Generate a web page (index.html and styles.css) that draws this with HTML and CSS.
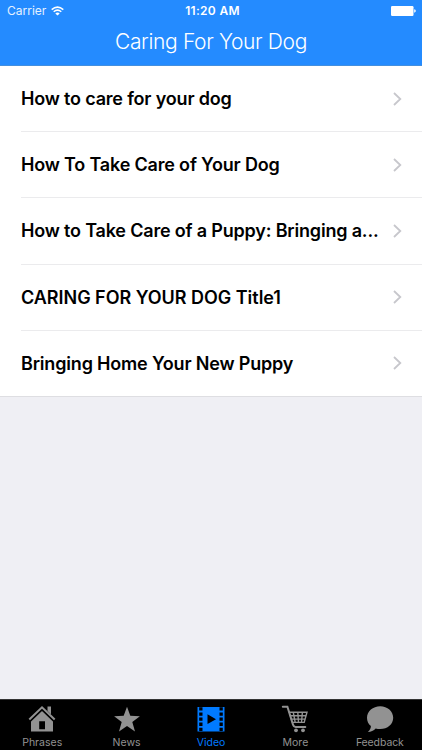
FILE: index.html
```html
<!DOCTYPE html>
<html lang="en">
<head>
  <meta charset="UTF-8" />
  <meta name="viewport" content="width=device-width, initial-scale=1.0"/>
  <title>Caring For Your Dog</title>
  <link rel="stylesheet" href="styles.css">
</head>
<body>
  <header class="header">
    <div class="status-bar">
      <div class="carrier">
        <span>Carrier</span>
        <svg class="wifi" viewBox="0 0 13 10" width="13" height="10">
          <path d="M.7 3.6 Q6.5 -1.4 12.3 3.6" />
          <path d="M2.7 5.8 Q6.5 2.5 10.3 5.8" />
          <path class="wifi-dot" d="M6.5 9.6 L4.3 7.4 Q6.5 5.6 8.7 7.4 Z" />
        </svg>
      </div>
      <span class="time">11:20 AM</span>
      <div class="battery-box">
        <svg viewBox="0 0 25 10" width="25" height="10" fill="#fff">
          <rect x="0" y="0" width="22.5" height="10" rx="1.2" />
          <path d="M23.2 3.3 Q24.8 3.6 24.8 5 T23.2 6.7 Z" />
        </svg>
      </div>
    </div>
    <h1>Caring For Your Dog</h1>
  </header>

  <ul class="video-list">
    <li class="row">
      <a href="#"><span class="row-title">How to care for your dog</span><svg class="chevron" viewBox="0 0 9 14" width="9" height="14"><path d="M1 1 L7.3 7 L1 13" /></svg></a>
    </li>
    <li class="row">
      <a href="#"><span class="row-title">How To Take Care of Your Dog</span><svg class="chevron" viewBox="0 0 9 14" width="9" height="14"><path d="M1 1 L7.3 7 L1 13" /></svg></a>
    </li>
    <li class="row">
      <a href="#"><span class="row-title">How to Take Care of a Puppy: Bringing a...</span><svg class="chevron" viewBox="0 0 9 14" width="9" height="14"><path d="M1 1 L7.3 7 L1 13" /></svg></a>
    </li>
    <li class="row">
      <a href="#"><span class="row-title caps">CARING FOR YOUR DOG Title1</span><svg class="chevron" viewBox="0 0 9 14" width="9" height="14"><path d="M1 1 L7.3 7 L1 13" /></svg></a>
    </li>
    <li class="row">
      <a href="#"><span class="row-title">Bringing Home Your New Puppy</span><svg class="chevron" viewBox="0 0 9 14" width="9" height="14"><path d="M1 1 L7.3 7 L1 13" /></svg></a>
    </li>
  </ul>

  <nav class="tab-bar">
    <a class="tab" href="#">
      <svg viewBox="0 0 28 28" width="28" height="28">
        <path d="M19.5 1.5 H23 V9.5 L19.5 6 Z" />
        <path d="M14 4.6 L25 15.4 V26.5 H3 V15.4 Z M11.2 16.3 V24.3 H17 V16.3 Z" fill-rule="evenodd" />
        <path class="roof-gap" d="M1.5 15.9 L14 3.8 L26.5 15.9" />
        <path class="roof" d="M1.3 14.5 L14 2.3 L26.7 14.5" />
      </svg>
      <span>Phrases</span>
    </a>
    <a class="tab" href="#">
      <svg viewBox="0 0 28 28" width="28" height="28">
        <path d="M14 1.8 L17.3 10.8 L26.9 11.2 L19.3 17.1 L22 26.4 L14 21.1 L6 26.4 L8.7 17.1 L1.1 11.2 L10.7 10.8 Z" />
      </svg>
      <span>News</span>
    </a>
    <a class="tab active" href="#">
      <svg viewBox="0 0 28 28" width="28" height="28">
        <path fill-rule="evenodd" d="M.5 2 H27.5 V26.5 H.5 Z
          M2.2 2.3 V5.6 H5.5 V2.3 Z M2.2 7.4 V10.7 H5.5 V7.4 Z M2.2 12.5 V15.8 H5.5 V12.5 Z M2.2 17.6 V20.9 H5.5 V17.6 Z M2.2 22.7 V26 H5.5 V22.7 Z
          M22.5 2.3 V5.6 H25.8 V2.3 Z M22.5 7.4 V10.7 H25.8 V7.4 Z M22.5 12.5 V15.8 H25.8 V12.5 Z M22.5 17.6 V20.9 H25.8 V17.6 Z M22.5 22.7 V26 H25.8 V22.7 Z
          M10.5 9.3 L19 14.2 L10.5 19.1 Z" />
      </svg>
      <span>Video</span>
    </a>
    <a class="tab" href="#">
      <svg viewBox="0 0 28 28" width="28" height="28">
        <g class="cart">
          <path d="M1.8 1.8 H6.4 L12 19.6 Q12.6 21.9 14.6 21.9 H24.3" />
          <path class="thin" d="M8.4 7.3 H26 L23.2 17.4 H11.4 M9.2 10.7 H25 M10.2 14.1 H24 M12.3 7.3 L14.2 17.4 M16.8 7.3 L17.5 17.4 M21.4 7.3 L20.5 17.4" />
        </g>
        <circle cx="15" cy="25.3" r="1.9" />
        <circle cx="22" cy="25.3" r="1.9" />
      </svg>
      <span>More</span>
    </a>
    <a class="tab" href="#">
      <svg viewBox="0 0 28 28" width="28" height="28">
        <path d="M14.2 1.3 C21.5 1.3 27.2 6.3 27.2 12.8 C27.2 19.3 21.6 24.1 14.2 24.1 C12.5 24.1 11 23.9 9.7 23.5 C7.7 25.8 5 27 1.8 27.1 C3.7 25.6 4.9 23.5 4.9 21.1 C2.4 19.2 1 16.2 1 12.8 C1 6.3 6.9 1.3 14.2 1.3 Z" />
      </svg>
      <span>Feedback</span>
    </a>
  </nav>
</body>
</html>
```
FILE: styles.css
```css
* {
  box-sizing: border-box;
}

body {
  margin: 0;
  height: 100vh;
  display: flex;
  flex-direction: column;
  background-color: #efeff4;
  font-family: 'Inter', 'Liberation Sans', sans-serif;
  overflow: hidden;
}

a {
  color: inherit;
  text-decoration: none;
}

.header {
  flex: none;
  height: 66px;
  background-color: #248bff;
  color: #fff;
  border-bottom: 1px solid #438fdf;
}

.status-bar {
  display: grid;
  grid-template-columns: 1fr auto 1fr;
  align-items: center;
  height: 21px;
  padding: 0 6px 0 7px;
  font-size: 12px;
}

.carrier {
  display: flex;
  align-items: center;
  gap: 5px;
  color: #e4f1ff;
}

.wifi {
  fill: none;
  stroke: #fff;
  stroke-width: 1.5;
}

.wifi-dot {
  fill: #fff;
  stroke: none;
}

.time {
  font-weight: 600;
  letter-spacing: 0.3px;
  padding-left: 2px;
}

.battery-box {
  display: flex;
  justify-content: flex-end;
}

h1 {
  margin: 0;
  height: 42px;
  line-height: 42px;
  font-size: 21px;
  font-weight: 300;
  letter-spacing: -0.35px;
  text-align: center;
}

.video-list {
  flex: none;
  margin: 0;
  padding: 0;
  list-style: none;
  background-color: #fff;
  border-bottom: 1px solid #dedee2;
}

.row {
  height: 66.2px;
  padding-left: 21px;
}

.row a {
  display: flex;
  align-items: center;
  justify-content: space-between;
  height: 100%;
  padding-right: 20px;
  border-bottom: 1px solid #ebebed;
}

.row:last-child {
  height: 65px;
}

.row:last-child a {
  border-bottom: none;
}

.row-title {
  font-size: 18px;
  font-weight: 600;
  letter-spacing: -0.18px;
  white-space: nowrap;
  color: #000;
}

.caps {
  letter-spacing: -0.03px;
}

.chevron {
  flex: none;
  fill: none;
  stroke: #c7c7cc;
  stroke-width: 1.8;
}

.tab-bar {
  flex: none;
  display: flex;
  height: 51px;
  margin-top: auto;
  background-color: #000;
  border-top: 1px solid #333;
}

.tab {
  flex: 1;
  display: flex;
  flex-direction: column;
  align-items: center;
  padding-top: 5px;
  font-size: 10.5px;
  line-height: 14px;
  color: #929292;
}

.tab:last-child {
  letter-spacing: -0.1px;
}

.tab svg {
  display: block;
  margin-bottom: 3px;
  fill: currentColor;
}

.active {
  color: #007aff;
}

.roof,
.roof-gap {
  fill: none;
  stroke: currentColor;
  stroke-width: 2;
}

.roof-gap {
  stroke: #000;
  stroke-width: 3;
}

.cart {
  fill: none;
  stroke: currentColor;
  stroke-width: 2;
  stroke-linecap: round;
}

.thin {
  stroke-width: 1.4;
}
```
